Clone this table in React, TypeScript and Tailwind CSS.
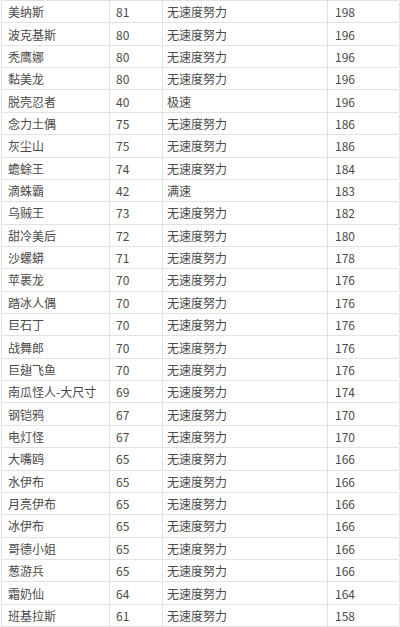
const rows: [string, string, string, string][] = [
  ["美纳斯", "81", "无速度努力", "198"],
  ["波克基斯", "80", "无速度努力", "196"],
  ["秃鹰娜", "80", "无速度努力", "196"],
  ["黏美龙", "80", "无速度努力", "196"],
  ["脱壳忍者", "40", "极速", "196"],
  ["念力土偶", "75", "无速度努力", "186"],
  ["灰尘山", "75", "无速度努力", "186"],
  ["蟾蜍王", "74", "无速度努力", "184"],
  ["滴蛛霸", "42", "满速", "183"],
  ["乌贼王", "73", "无速度努力", "182"],
  ["甜冷美后", "72", "无速度努力", "180"],
  ["沙螺蟒", "71", "无速度努力", "178"],
  ["苹裹龙", "70", "无速度努力", "176"],
  ["踏冰人偶", "70", "无速度努力", "176"],
  ["巨石丁", "70", "无速度努力", "176"],
  ["战舞郎", "70", "无速度努力", "176"],
  ["巨翅飞鱼", "70", "无速度努力", "176"],
  ["南瓜怪人-大尺寸", "69", "无速度努力", "174"],
  ["钢铠鸦", "67", "无速度努力", "170"],
  ["电灯怪", "67", "无速度努力", "170"],
  ["大嘴鸥", "65", "无速度努力", "166"],
  ["水伊布", "65", "无速度努力", "166"],
  ["月亮伊布", "65", "无速度努力", "166"],
  ["冰伊布", "65", "无速度努力", "166"],
  ["哥德小姐", "65", "无速度努力", "166"],
  ["葱游兵", "65", "无速度努力", "166"],
  ["霜奶仙", "64", "无速度努力", "164"],
  ["班基拉斯", "61", "无速度努力", "158"],
];

export default function App() {
  return (
    <div className="w-[400px] h-[627px] bg-white overflow-hidden pl-px">
      {/* speed table, cells separated by light grey rules */}
      <div
        className="w-[398px] border-t border-l border-[#e2e2e2] text-[12px] text-[#4a4a4a]"
        style={{ fontFamily: '"Noto Sans CJK SC", "Noto Sans", sans-serif' }}
      >
        {rows.map((r, i) => (
          <div
            key={i}
            className="grid grid-cols-[108px_53px_165px_72px] h-[22.36px] border-b border-[#e2e2e2]"
          >
            <div className="flex items-center pl-[6px] pt-px border-r border-[#e2e2e2] whitespace-nowrap">
              {r[0]}
            </div>
            <div className="flex items-center pl-[6px] pt-px border-r border-[#e2e2e2]">
              {r[1]}
            </div>
            <div className="flex items-center pl-[4px] pt-px border-r border-[#e2e2e2]">
              {r[2]}
            </div>
            <div className="flex items-center pl-[7px] pt-px border-r border-[#e2e2e2]">
              {r[3]}
            </div>
          </div>
        ))}
      </div>
    </div>
  );
}
